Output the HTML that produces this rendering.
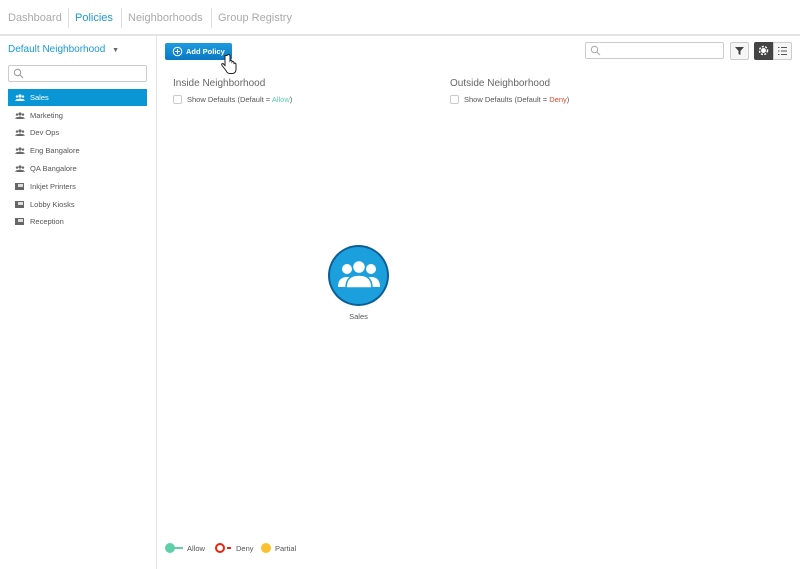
<!DOCTYPE html>
<html><head><style>
*{margin:0;padding:0;box-sizing:border-box}
body{width:800px;height:569px;background:#fff;font-family:"Liberation Sans",sans-serif;position:relative;overflow:hidden;color:#555}
.a{position:absolute}
.nav{font-size:11px;color:#aaa;top:12px}
.sep{width:1px;height:20px;background:#ddd;top:8px}
.item{left:8px;width:139px;height:17px;font-size:7.5px;color:#555;line-height:17px;padding-left:22px}
.ico{position:absolute;left:7px;top:5px}
.cb{width:9px;height:9px;border:1px solid #ccc;border-radius:2px}
</style></head><body>
<div class="a nav" style="left:8px">Dashboard</div>
<div class="a sep" style="left:68px"></div>
<div class="a nav" style="left:75px;color:#1b9ad6">Policies</div>
<div class="a sep" style="left:121px"></div>
<div class="a nav" style="left:128px">Neighborhoods</div>
<div class="a sep" style="left:211px"></div>
<div class="a nav" style="left:218px">Group Registry</div>
<div class="a" style="left:0;top:34px;width:800px;height:2px;background:#e4e4e4"></div>
<div class="a" style="left:156px;top:36px;width:1px;height:533px;background:#e4e4e4"></div>

<div class="a" style="left:8px;top:44px;font-size:10px;color:#1b9ad6">Default Neighborhood <span style="font-size:7px;color:#666;margin-left:4px">▼</span></div>
<div class="a" style="left:8px;top:65px;width:139px;height:17px;border:1px solid #ccc;border-radius:2px"></div>
<svg class="a" style="left:13px;top:68px" width="11" height="11"><circle cx="4.5" cy="4.5" r="3.2" fill="none" stroke="#999" stroke-width="1"/><line x1="7" y1="7" x2="10" y2="10" stroke="#999"/></svg>

<div class="a item" style="top:89px;background:#0a96d4;color:#fff"><svg class="ico" width="10" height="7"><circle cx="5" cy="2" r="1.6" fill="#fff"/><circle cx="2" cy="2.6" r="1.2" fill="#fff"/><circle cx="8" cy="2.6" r="1.2" fill="#fff"/><path d="M1.5 7 Q5 2 8.5 7Z M0 7 Q2 3.5 4 6Z M6 6Q8 3.5 10 7Z" fill="#fff"/></svg>Sales</div>
<div class="a item" style="top:107px"><svg class="ico" width="10" height="7"><circle cx="5" cy="2" r="1.6" fill="#666"/><circle cx="2" cy="2.6" r="1.2" fill="#666"/><circle cx="8" cy="2.6" r="1.2" fill="#666"/><path d="M1.5 7 Q5 2 8.5 7Z M0 7 Q2 3.5 4 6Z M6 6Q8 3.5 10 7Z" fill="#666"/></svg>Marketing</div>
<div class="a item" style="top:124px"><svg class="ico" width="10" height="7"><circle cx="5" cy="2" r="1.6" fill="#666"/><circle cx="2" cy="2.6" r="1.2" fill="#666"/><circle cx="8" cy="2.6" r="1.2" fill="#666"/><path d="M1.5 7 Q5 2 8.5 7Z M0 7 Q2 3.5 4 6Z M6 6Q8 3.5 10 7Z" fill="#666"/></svg>Dev Ops</div>
<div class="a item" style="top:142px"><svg class="ico" width="10" height="7"><circle cx="5" cy="2" r="1.6" fill="#666"/><circle cx="2" cy="2.6" r="1.2" fill="#666"/><circle cx="8" cy="2.6" r="1.2" fill="#666"/><path d="M1.5 7 Q5 2 8.5 7Z M0 7 Q2 3.5 4 6Z M6 6Q8 3.5 10 7Z" fill="#666"/></svg>Eng Bangalore</div>
<div class="a item" style="top:160px"><svg class="ico" width="10" height="7"><circle cx="5" cy="2" r="1.6" fill="#666"/><circle cx="2" cy="2.6" r="1.2" fill="#666"/><circle cx="8" cy="2.6" r="1.2" fill="#666"/><path d="M1.5 7 Q5 2 8.5 7Z M0 7 Q2 3.5 4 6Z M6 6Q8 3.5 10 7Z" fill="#666"/></svg>QA Bangalore</div>
<div class="a item" style="top:178px"><svg class="ico" width="10" height="7"><rect x="0" y="0" width="9" height="7" fill="#666"/><rect x="3" y="1" width="5" height="3" fill="#ddd"/></svg>Inkjet Printers</div>
<div class="a item" style="top:196px"><svg class="ico" width="10" height="7"><rect x="0" y="0" width="9" height="7" fill="#666"/><rect x="3" y="1" width="5" height="3" fill="#ddd"/></svg>Lobby Kiosks</div>
<div class="a item" style="top:213px"><svg class="ico" width="10" height="7"><rect x="0" y="0" width="9" height="7" fill="#666"/><rect x="3" y="1" width="5" height="3" fill="#ddd"/></svg>Reception</div>

<div class="a" style="left:165px;top:43px;width:67px;height:17px;background:linear-gradient(#1e9be0,#0a78c2);border-radius:2px;color:#fff;font-size:7.5px;font-weight:bold;line-height:17px;padding-left:21px">Add Policy</div>
<svg class="a" style="left:172px;top:46px" width="11" height="11"><circle cx="5.5" cy="5.5" r="4.3" fill="none" stroke="#fff"/><path d="M5.5 3v5M3 5.5h5" stroke="#fff"/></svg>
<svg class="a" style="left:220px;top:54px" width="18" height="22"><path d="M5 1.5v10l-2-2q-2 0-1 2l4 5q1 3 4 3h3q3-1 3-4v-5q0-2-2-1v-1q-1-2-2-.5v-1q-1-1.5-2 0V1.5q-1.5-2-3 0Z" fill="#fff" stroke="#222" stroke-width="1"/></svg>

<div class="a" style="left:173px;top:78px;font-size:10px;color:#666">Inside Neighborhood</div>
<div class="a cb" style="left:173px;top:95px"></div>
<div class="a" style="left:187px;top:95px;font-size:7.5px;color:#555">Show Defaults (Default = <span style="color:#5fcfa8">Allow</span>)</div>
<div class="a" style="left:450px;top:78px;font-size:10px;color:#666">Outside Neighborhood</div>
<div class="a cb" style="left:450px;top:95px"></div>
<div class="a" style="left:464px;top:95px;font-size:7.5px;color:#555">Show Defaults (Default = <span style="color:#e8462a">Deny</span>)</div>

<div class="a" style="left:585px;top:42px;width:139px;height:17px;border:1px solid #ccc;border-radius:2px"></div>
<svg class="a" style="left:590px;top:45px" width="11" height="11"><circle cx="4.5" cy="4.5" r="3.2" fill="none" stroke="#aaa"/><line x1="7" y1="7" x2="10" y2="10" stroke="#aaa"/></svg>
<div class="a" style="left:730px;top:42px;width:19px;height:18px;border:1px solid #ccc;border-radius:2px;background:#f6f6f6"></div>
<svg class="a" style="left:734px;top:46px" width="11" height="10"><path d="M1 1h9L6.5 5v4L4.5 8V5Z" fill="#444"/></svg>
<div class="a" style="left:754px;top:42px;width:19px;height:18px;background:#444;border-radius:2px 0 0 2px"></div>
<svg class="a" style="left:758px;top:45px" width="11" height="11"><circle cx="5.5" cy="5.5" r="2.5" fill="#fff"/><circle cx="5.5" cy="5.5" r="4" fill="none" stroke="#fff" stroke-width="1.5" stroke-dasharray="2 1.4"/></svg>
<div class="a" style="left:773px;top:42px;width:19px;height:18px;border:1px solid #ccc;border-radius:0 2px 2px 0;background:#f6f6f6"></div>
<svg class="a" style="left:777px;top:46px" width="11" height="10"><path d="M1 1.5h1.5M4 1.5h6M1 5h1.5M4 5h6M1 8.5h1.5M4 8.5h6" stroke="#555"/></svg>

<div class="a" style="left:328px;top:245px;width:61px;height:61px;border-radius:50%;background:#0c5f97"></div>
<div class="a" style="left:330px;top:247px;width:57px;height:57px;border-radius:50%;background:#1ba0dd"></div>
<svg class="a" style="left:336px;top:259px" width="46" height="30"><g fill="#fff"><circle cx="11" cy="10" r="5"/><path d="M2 28q0-10 9-10q9 0 9 10Z"/><circle cx="35" cy="10" r="5"/><path d="M26 28q0-10 9-10q9 0 9 10Z"/><circle cx="23" cy="8" r="6.5" stroke="#1ba0dd" stroke-width="1.5"/><path d="M10 29q0-13 13-13q13 0 13 13Z" stroke="#1ba0dd" stroke-width="1.5"/></g></svg>
<div class="a" style="left:340px;top:312px;width:37px;text-align:center;font-size:7.5px;color:#555">Sales</div>

<div class="a" style="left:165px;top:543px;width:10px;height:10px;border-radius:50%;background:#5fcfa8"></div>
<div class="a" style="left:173px;top:547px;width:10px;height:1.5px;background:#5fcfa8"></div>
<div class="a" style="left:187px;top:544px;font-size:7.5px">Allow</div>
<div class="a" style="left:215px;top:543px;width:10px;height:10px;border-radius:50%;border:2px solid #e8250f"></div>
<div class="a" style="left:227px;top:547px;width:4px;height:2px;background:#e8250f"></div>
<div class="a" style="left:236px;top:544px;font-size:7.5px">Deny</div>
<div class="a" style="left:261px;top:543px;width:10px;height:10px;border-radius:50%;background:#fbc02d"></div>
<div class="a" style="left:275px;top:544px;font-size:7.5px">Partial</div>
</body></html>
